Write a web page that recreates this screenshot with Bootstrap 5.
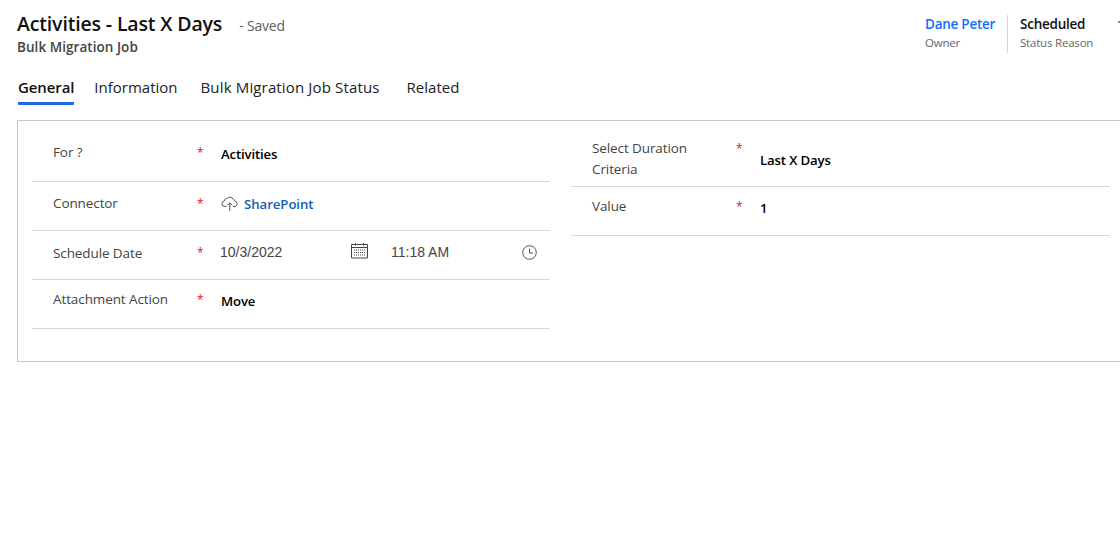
<!DOCTYPE html>
<html lang="en">
<head>
    <meta charset="UTF-8">
    <title>Activities - Last X Days</title>
    <link href="https://cdn.jsdelivr.net/npm/bootstrap@5.3.3/dist/css/bootstrap.min.css" rel="stylesheet">
    <style>
        html, body { height: 100%; overflow: hidden; }
        body { background: #fff; font-family: "Open Sans", "Noto Sans", sans-serif; font-size: 13.5px; color: #111; letter-spacing: -0.2px; }
        .page-wrap { width: 1140px; padding: 11px 0 0 17px; }
        .rec-title { font-size: 19.5px; font-weight: 600; line-height: 26px; color: #111; margin: 0; letter-spacing: -0.15px; }
        .rec-saved { font-size: 14px; color: #605e5c; margin-left: 17px; }
        .rec-entity { font-size: 13.5px; font-weight: 600; color: #444; line-height: 21px; letter-spacing: 0.05px; }
        .head-right { width: 195px; margin-right: 20px; padding-top: 4px; }
        .head-name { font-size: 13.5px; font-weight: 600; line-height: 18px; letter-spacing: -0.25px; }
        .head-sub { font-size: 11.5px; color: #666; line-height: 20px; }
        .head-owner { width: 82px; }
        .head-status { border-left: 1px solid #d8d8d8; padding-left: 12px; }
        .tab-strip { margin: 15px 0 0 1px; height: 33px; }
        .tab-item { font-size: 15px; line-height: 21px; padding-top: 4px; height: 32px; color: #222; letter-spacing: 0; }
        .tab-item.is-on { font-weight: 600; border-bottom: 3px solid #2266e3; color: #111; letter-spacing: -0.1px; border-radius: 1px; }
        .tab-info { margin-left: 20px; }
        .tab-status { margin-left: 23px; letter-spacing: 0.15px; }
        .tab-related { margin-left: 27px; }
        .form-box { border: 1px solid #c8c8c8; height: 242px; width: 1130px; margin-top: 14px; padding: 12px 0 0 14px; gap: 21px; }
        .form-col-a { width: 518px; }
        .form-col-b { width: 539px; }
        .field-row { border-bottom: 1px solid #d8d8d8; height: 49px; padding-left: 21px; }
        .field-row.is-tall { height: 54px; }
        .field-label { width: 144px; padding-right: 20px; line-height: 21px; color: #444; font-size: 13.5px; letter-spacing: -0.1px; }
        .field-star { width: 24px; color: #e81123; font-size: 12px; line-height: 21px; }
        .field-val { font-weight: 600; font-size: 13.2px; color: #000; line-height: 21px; letter-spacing: -0.15px; }
        .field-plain { font-family: "Liberation Sans", Arial, sans-serif; font-size: 14px; color: #444; line-height: 21px; letter-spacing: 0; }
        .sp-link { color: #1160b7; letter-spacing: -0.05px; }
        .pt-a { padding-top: 9px; }
        .pt-b { padding-top: 11px; }
        .pt-e { padding-top: 12px; }
        .pt-c { padding-top: 5px; }
        .pt-d { padding-top: 17px; }
        .date-cell { width: 148px; margin-left: -1px; }
        .time-cell { width: 146px; margin-left: 23px; }
        .edge-mark { position: absolute; top: 21px; left: 1118px; width: 2px; height: 2px; background: #a08050; }
    </style>
</head>
<body>
    <div class="page-wrap">
        <div class="d-flex justify-content-between">
            <div>
                <div class="d-flex align-items-baseline">
                    <h1 class="rec-title">Activities - Last X Days</h1>
                    <span class="rec-saved">- Saved</span>
                </div>
                <div class="rec-entity">Bulk Migration Job</div>
            </div>
            <div class="head-right d-flex align-items-start">
                <div class="head-owner">
                    <div class="head-name text-primary">Dane Peter</div>
                    <div class="head-sub">Owner</div>
                </div>
                <div class="head-status">
                    <div class="head-name">Scheduled</div>
                    <div class="head-sub">Status Reason</div>
                </div>
            </div>
        </div>
        <span class="edge-mark"></span>

        <div class="tab-strip d-flex">
            <div class="tab-item is-on">General</div>
            <div class="tab-item tab-info">Information</div>
            <div class="tab-item tab-status">Bulk Migration Job Status</div>
            <div class="tab-item tab-related">Related</div>
        </div>

        <div class="form-box d-flex">
            <div class="form-col-a">
                <div class="field-row d-flex">
                    <div class="field-label pt-a">For ?</div>
                    <div class="field-star pt-a">*</div>
                    <div class="field-val pt-b">Activities</div>
                </div>
                <div class="field-row d-flex">
                    <div class="field-label pt-b">Connector</div>
                    <div class="field-star pt-b">*</div>
                    <div class="field-val pt-e d-flex align-items-start gap-1">
                        <svg width="19" height="18" viewBox="0 0 19 18" fill="none" stroke="#555" stroke-width="1">
                            <path d="M5.500 12.500H4a2.800 2.800 0 0 1-.5-5.600 2.500 2.500 0 0 1 3-2.500A3.200 3.200 0 0 1 12 5a2.300 2.300 0 0 1 1.500 2 2.800 2.800 0 0 1 .5 5.500h-2"/>
                            <path d="M8.800 17V9M6.300 11.300l2.500-2.500 2.500 2.500"/>
                        </svg>
                        <span class="sp-link">SharePoint</span>
                    </div>
                </div>
                <div class="field-row d-flex">
                    <div class="field-label pt-e">Schedule Date</div>
                    <div class="field-star pt-b">*</div>
                    <div class="field-plain pt-b date-cell d-flex justify-content-between align-items-start">
                        <span>10/3/2022</span>
                        <svg width="17" height="17" viewBox="0 0 17 17" fill="none" stroke="#444">
                            <path d="M.5 2.500h16v13.500H.5zM.5 5.500h16M4.500 1v2.500M12.500 1v2.500"/>
                            <path stroke-dasharray="1 1" d="M3 8h11M3 10.500h11M3 13h11"/>
                        </svg>
                    </div>
                    <div class="field-plain pt-b time-cell d-flex justify-content-between align-items-start">
                        <span>11:18 AM</span>
                        <svg width="15" height="21" viewBox="0 0 15 21" fill="none" stroke="#555">
                            <circle cx="7.500" cy="10.500" r="6.800"/>
                            <path d="M7.500 6.500v4.500h3.500"/>
                        </svg>
                    </div>
                </div>
                <div class="field-row d-flex">
                    <div class="field-label pt-a">Attachment Action</div>
                    <div class="field-star pt-a">*</div>
                    <div class="field-val pt-b">Move</div>
                </div>
            </div>
            <div class="form-col-b">
                <div class="field-row is-tall d-flex">
                    <div class="field-label pt-c">Select Duration Criteria</div>
                    <div class="field-star pt-c">*</div>
                    <div class="field-val pt-d">Last X Days</div>
                </div>
                <div class="field-row d-flex">
                    <div class="field-label pt-a">Value</div>
                    <div class="field-star pt-a">*</div>
                    <div class="field-val pt-b">1</div>
                </div>
            </div>
        </div>
    </div>
    <script src="https://cdn.jsdelivr.net/npm/bootstrap@5.3.3/dist/js/bootstrap.bundle.min.js"></script>
</body>
</html>
